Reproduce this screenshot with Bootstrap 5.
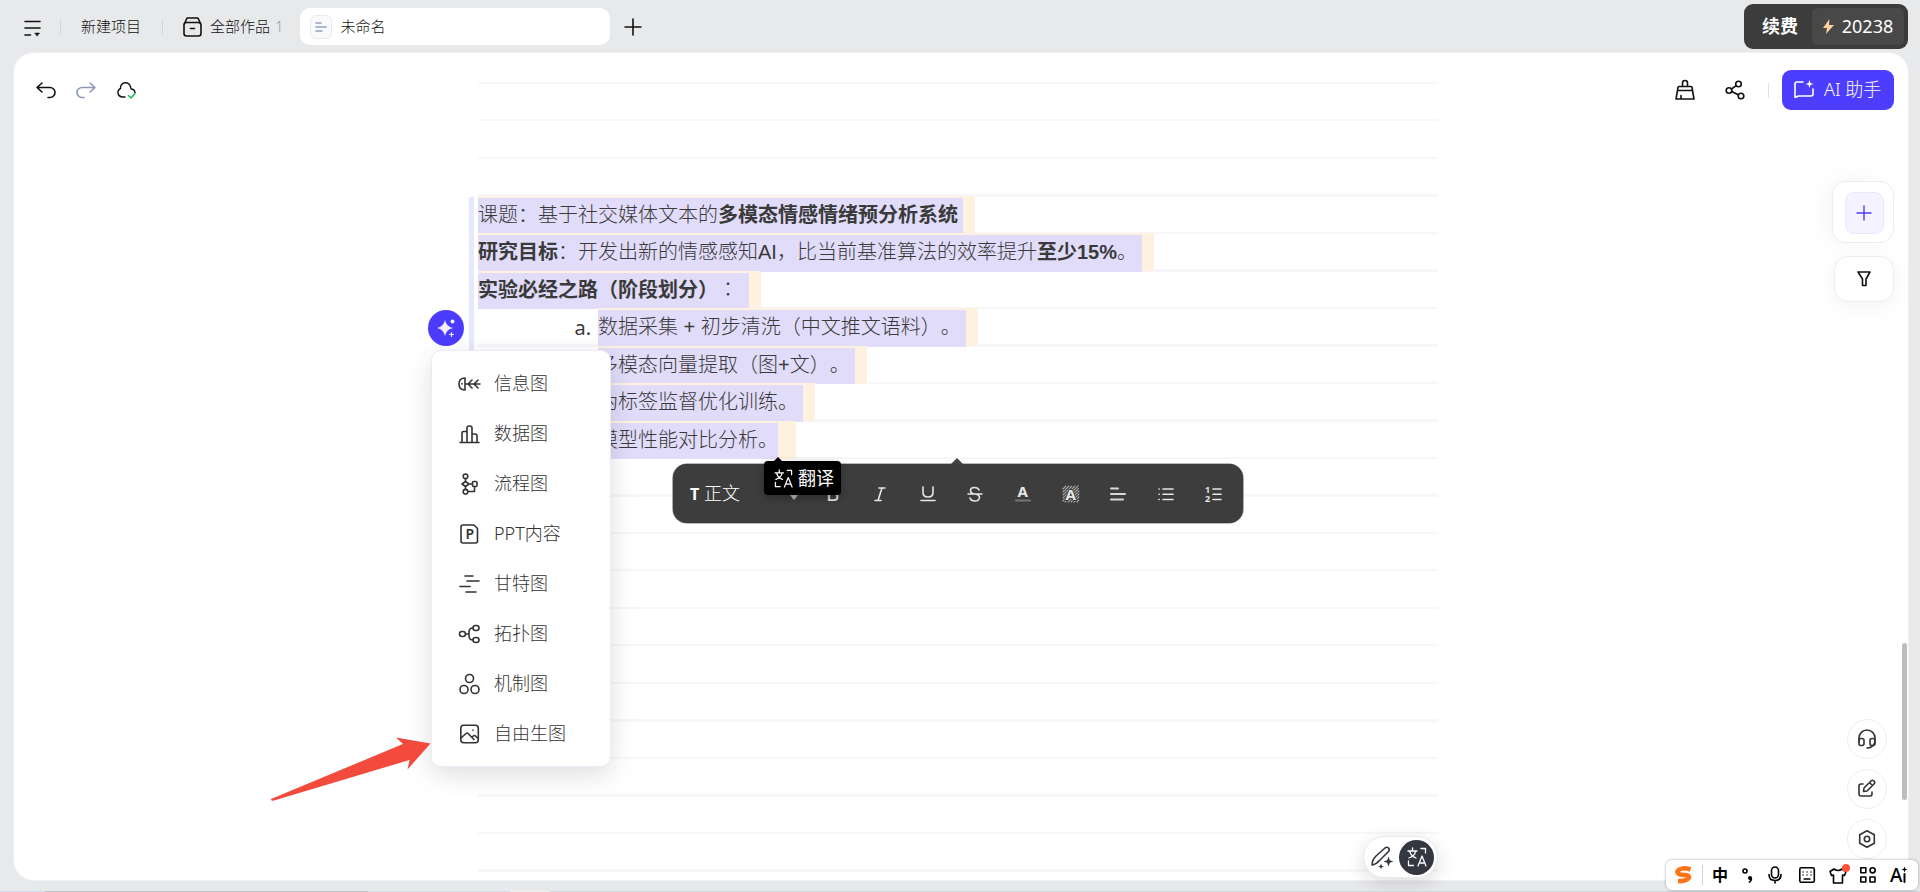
<!DOCTYPE html>
<html lang="zh-CN">
<head>
<meta charset="utf-8">
<title>未命名</title>
<link rel="stylesheet" href="https://cdn.jsdelivr.net/npm/bootstrap@5.3.0/dist/css/bootstrap.min.css">
<script src="https://cdn.jsdelivr.net/npm/bootstrap@5.3.0/dist/js/bootstrap.bundle.min.js"></script>
<style>
body{width:1920px;height:892px;overflow:hidden;background:#e8e9eb;color:#111;font:300 15px/1.5 "Noto Sans","Noto Sans CJK SC",sans-serif;text-spacing-trim:space-all}
svg{display:block;flex:none;overflow:visible;fill:none;stroke:currentColor;stroke-width:1.6;stroke-linecap:round;stroke-linejoin:round}
svg text{stroke:none;fill:currentColor}
.topbar{height:53px;padding:0 12px 0 24px}
.topbar>*{flex:none}
.vline{width:1px;height:15px;background:#d2d4d8}
.tab-item{width:310px;height:37px;margin-left:16px;padding-left:10px;border-radius:10px;background:#fff}
.doc-ico{width:22px;height:24px;border:1px solid #e9eaef;border-radius:6px;background:#fafafc;color:#93a0c4}
.credit{width:164px;height:45px;border-radius:9px;background:#3c3c3c;padding:4px 4px 4px 18px;color:#fff;font-size:18px}
.credit-num{width:92px;height:37px;border-radius:6px;background:#484848;font-weight:400}
.board{width:1894px;height:827px;margin-left:14px;border-radius:20px;background:#fff;box-shadow:0 0 0 1px #f0f0f5}
.tools-l{left:22px;top:27px}
.tools-r{right:14px;top:17px}
.ai-btn{width:112px;height:40px;border-radius:9px;background:#4d3dff;color:#fff;font-size:18px;padding:0 0 1px 12px}
.sheet{width:960px;height:790px;margin-left:464px;margin-top:29px;padding-top:113.5px;background:repeating-linear-gradient(#f6f6fb 0 2px,transparent 2px 37.5px);color:#3a3a3a;font:300 20px/35px "Liberation Sans","Noto Sans CJK SC",sans-serif}
.sheet-wrap{height:827px;overflow:hidden}
.row-ln{height:37.5px;display:flex;white-space:nowrap}
.hl{height:38px;padding-top:2px;background:#fff1df}
.sel{height:36.5px;background:#e1dcf9;margin-right:12px}
.sel b{font-weight:700}
.row-ln:nth-child(7) .sel{margin-right:18px}
.num{width:120px;padding:2px 7px 0 0;text-align:right;font-family:"Noto Sans",sans-serif;font-weight:400}
.mid{font-family:"Noto Sans CJK TC";display:inline-block;width:20px;line-height:20px}
.sidebar-mark{left:455px;top:144px;width:5px;height:200px;background:#e6e9fd}
.spark{left:414px;top:257px;width:36px;height:36px;border-radius:50%;background:#4b3bff;color:#f2f0ff}
.ai-menu{left:417px;top:297px;width:180px;height:417px;border:1px solid #eceaf6;border-radius:10px;background:#fff;box-shadow:0 8px 26px rgba(0,0,0,.13);padding-top:8px;font-size:18px;color:#333;z-index:2}
.ai-menu>div{height:50px;padding:0 0 1px 26px;gap:13px}
.fmt{left:659px;top:411px;width:570px;height:59px;border-radius:14px;background:#3d3d3d;box-shadow:0 0 0 .6px #777;color:#e6e6e6;font-size:18px}
.fmt:before{content:"";position:absolute;left:278px;top:-6px;border:6px solid transparent;border-top:0;border-bottom-color:#444}
.fmt .cell{width:47.55px;display:flex;justify-content:center}
.gl{font:20px/24px Inter,"Liberation Sans",sans-serif}
.tip{left:750px;top:408px;width:77px;height:34px;border-radius:4px;background:#000;color:#fff;font-size:18px;gap:5px;padding:1px 0 0 10px;z-index:3;box-shadow:0 3px 9px rgba(0,0,0,.3)}
.tip:before{content:"";position:absolute;left:10px;top:-4px;border:4px solid transparent;border-top:0;border-bottom-color:#000}
.side{right:14px;top:128px}
.card-a{width:62px;height:62px;border:1px solid #ececf6;border-radius:14px;background:#fff;box-shadow:-8px 0 22px rgba(0,0,0,.04);padding:1px 0 0 2px}
.card-in{width:39px;height:42px;border:1px solid #eae7ff;border-radius:9px;background:#f5f3ff;color:#4b3bff}
.card-b{width:60px;height:46px;border:1px solid #ececf6;border-radius:14px;background:#fff;box-shadow:0 4px 22px rgba(0,0,0,.05)}
.help{right:21px;top:666px;gap:10px;color:#333}
.help>div{width:40px;height:40px;border:1px solid #eeeef7;border-radius:50%;background:#fff}
.thumb{right:1px;top:590px;width:5px;height:157px;border-radius:3px;background:#bdbdbd}
.pill{left:1349px;top:783px;width:75px;height:42px;border-radius:21px;background:#fff;border:1px solid #e9e9ec;box-shadow:0 6px 20px rgba(0,0,0,.13);color:#343641;padding:0 3px 0 6px}
.pill-on{width:35px;height:35px;border-radius:50%;background:#343641;color:#fff}
.ime{left:1666px;top:860px;width:252px;height:30px;border-radius:6px;background:#fff;box-shadow:0 0 3px rgba(0,0,0,.35);padding:0 10px 0 9px;color:#000}
.arrow-red{left:268px;top:734px;z-index:4}
.strip{left:0;top:891px;width:1920px;height:1px;background:linear-gradient(90deg,#cfdcec 45px,#bfc1c4 45px 368px,#d3dfeb 368px 510px,#eee 510px 550px,#ccd9e0 550px)}
</style>
</head>
<body class="position-relative">
<svg width="0" height="0" class="position-absolute"><defs>
<g id="trans"><path d="M1 4h9M5.500 1v3M2 11q6-2 6.500-7M3 5q1 4 6 6M14 1.500h4.500v4.500M1.500 14v4.500h5M11 19l4-10 4 10M12.200 16h5.600"/></g>
</defs></svg>

<header class="topbar d-flex align-items-center">
  <svg width="17" height="18" viewBox="0 0 17 18" style="margin-top:2px"><path d="M1 2.500h15M1 9h15M1 16h5.500"/><path d="M11 14h4.500L13.200 17z" fill="currentColor" stroke-width=".5"/></svg>
  <i class="vline" style="margin:0 20px 0 19px"></i>
  <span>新建项目</span>
  <i class="vline" style="margin:0 20px 0 21px"></i>
  <svg width="19" height="20" viewBox="0 0 19 20"><rect x="1" y="5.500" width="17" height="13.500" rx="2.500"/><path d="M2 5.500L4 1h11l2 4.500M7.500 11.500h4"/></svg>
  <span style="margin-left:8px">全部作品</span>
  <span style="margin-left:5px;color:#969eae">1</span>
  <div class="tab-item d-flex align-items-center"><span class="doc-ico d-flex align-items-center justify-content-center"><svg width="12" height="12" viewBox="0 0 12 12"><path d="M1 2h5M1 6h10M1 10h6"/></svg></span><span style="margin-left:9px">未命名</span></div>
  <svg width="18" height="18" viewBox="0 0 18 18" style="margin-left:14px"><path d="M9 1v16M1 9h16"/></svg>
  <div class="credit d-flex align-items-center justify-content-between ms-auto align-self-start mt-1"><b class="fw-bold">续费</b><div class="credit-num d-flex align-items-center justify-content-center gap-2"><svg width="11" height="15" viewBox="0 0 11 15"><path d="M6.500 0L0 9h4l-1 6 8-9H6z" fill="#ffd099" stroke="none"/></svg><span>20238</span></div></div>
</header>

<main class="board position-relative">
  <div class="sheet-wrap"><div class="d-flex flex-column h-100"><article class="sheet">
    <div class="row-ln"><div class="hl"><div class="sel" style="width:485px">课题：基于社交媒体文本的<b>多模态情感情绪预分析系统</b></div></div></div>
    <div class="row-ln"><div class="hl"><div class="sel" style="width:664px"><b>研究目标</b>：开发出新的情感感知AI，比当前基准算法的效率提升<b>至少15%</b>。</div></div></div>
    <div class="row-ln"><div class="hl"><div class="sel" style="width:271px"><b>实验必经之路（阶段划分）</b><span class="mid" lang="zh-Hant">：</span></div></div></div>
    <div class="row-ln"><span class="num">a.</span><div class="hl"><div class="sel" style="width:368px">数据采集 + 初步清洗（中文推文语料）<span class="d-inline-block lh-1">。</span></div></div></div>
    <div class="row-ln"><span class="num">b.</span><div class="hl"><div class="sel" style="width:257px">多模态向量提取（图+文）<span class="d-inline-block lh-1">。</span></div></div></div>
    <div class="row-ln"><span class="num">c.</span><div class="hl"><div class="sel" style="width:205px">伪标签监督优化训练。</div></div></div>
    <div class="row-ln"><span class="num">d.</span><div class="hl"><div class="sel" style="width:180px">模型性能对比分析。</div></div></div>
  </article></div></div>

  <div class="tools-l position-absolute d-flex align-items-center">
    <svg width="20" height="20" viewBox="0 0 20 20"><path d="M6 3L1 7.500 6 12M1 7.500h13a5 5 0 0 1 0 10h-2"/></svg>
    <svg width="20" height="20" viewBox="0 0 20 20" style="margin-left:20px;color:#8d99b5"><path d="M14 3l5 4.500-5 4.500M19 7.500H6a5 5 0 0 0 0 10h2"/></svg>
    <svg width="20" height="20" viewBox="0 0 20 20" style="margin-left:20px"><path stroke-width="1.400" d="M9 17H6A4.500 4.500 0 0 1 4.500 8.500 5 5 0 0 1 14.500 7q.8 1.500.5 2 3.500 0 4 3.500"/><path d="M12.500 15.500l2.500 2.500 4-4.500" stroke="#1fb866"/></svg>
  </div>

  <div class="tools-r position-absolute d-flex align-items-center">
    <svg width="20" height="20" viewBox="0 0 20 20"><path d="M3 7.500Q3 6.500 4 6.500h12q1 0 1 1L19 19H1zM2.500 10.500h15M7.500 6V3a2.500 2.500 0 0 1 5 0v3M6 15.500V19"/></svg>
    <svg width="20" height="20" viewBox="0 0 20 20" style="margin-left:30px"><circle cx="4" cy="10.500" r="2.800"/><circle cx="13.500" cy="4" r="2.800"/><circle cx="16" cy="16" r="2.800"/><path d="M6.500 9l4.700-3.300M6.700 11.500l6.500 3.200"/></svg>
    <i class="vline" style="margin:0 13px 0 23px;background:#dde2ef"></i>
    <div class="ai-btn d-flex align-items-center"><svg width="20" height="19" viewBox="0 0 20 19" style="margin-right:10px"><path d="M9 2H3Q1 2 1 4v13.500L4.500 16H17q2 0 2-2V9"/><path d="M15.500 0l1 3 3 1-3 1-1 3-1-3-3-1 3-1z" fill="currentColor" stroke="none"/></svg>AI 助手</div>
  </div>

  <div class="sidebar-mark position-absolute"></div>
  <div class="spark position-absolute d-flex align-items-center justify-content-center"><svg width="20" height="20" viewBox="0 0 20 20"><path d="M9 2q1.200 6.500 8 8-6.800 1.500-8 8-1.300-6.500-8-8 6.700-1.500 8-8z" fill="currentColor" stroke="none"/><circle cx="16.500" cy="3.500" r="2" fill="currentColor" stroke="none"/><path d="M15.500 14.500v4M13.500 16.500h4" stroke-width="1.200"/></svg></div>

  <nav class="ai-menu position-absolute">
    <div class="d-flex align-items-center"><svg width="23" height="20" viewBox="0 0 23 20"><path d="M7 4Q1 4 1 10t6 6zM7 10h15M14 6l-4 4 4 4M20 6l-4 4 4 4M4 9.500v.5"/></svg>信息图</div>
    <div class="d-flex align-items-center"><svg width="23" height="20" viewBox="0 0 23 20"><path d="M2 18.500h19M4 18V9q0-1.500 1.500-1.500H9M9 18V4q0-2 2-2h1q2 0 2 2v14M14 10h3q2 0 2 2v6"/></svg>数据图</div>
    <div class="d-flex align-items-center"><svg width="23" height="20" viewBox="0 0 23 20"><circle cx="7.500" cy="2.300" r="2.300"/><circle cx="7.500" cy="17.700" r="2.300"/><rect x="14.500" y="7.500" width="4.500" height="5" rx="1"/><path d="M7.500 5v3M4 10l3.500-2.500L11 10l-3.500 2.500zM11 10h3.500M7.500 12.500V15M10 17.500h6.500v-5"/></svg>流程图</div>
    <div class="d-flex align-items-center"><svg width="23" height="20" viewBox="0 0 23 20"><path d="M5 1h11l3.500 3.500V17q0 2-2 2H5q-2 0-2-2V3q0-2 2-2z"/><text x="7.500" y="15.300" font-size="14" font-weight="600" font-family="Noto Sans">P</text></svg>PPT内容</div>
    <div class="d-flex align-items-center"><svg width="23" height="20" viewBox="0 0 23 20"><path d="M7 2h8M9 7h12M2 12.500h10M8 18h10"/></svg>甘特图</div>
    <div class="d-flex align-items-center"><svg width="23" height="20" viewBox="0 0 23 20"><rect x="1.500" y="7.500" width="6" height="5" rx="2.500"/><rect x="15" y="1.500" width="6" height="5" rx="2.500"/><rect x="15" y="13.500" width="6" height="5" rx="2.500"/><path d="M7.500 10H11M15 4q-4 0-4 4v4q0 4 4 4"/></svg>拓扑图</div>
    <div class="d-flex align-items-center"><svg width="23" height="20" viewBox="0 0 23 20"><circle cx="11.500" cy="4.500" r="4"/><circle cx="6" cy="15.500" r="4"/><circle cx="17" cy="15.500" r="4"/></svg>机制图</div>
    <div class="d-flex align-items-center"><svg width="23" height="20" viewBox="0 0 23 20"><rect x="2.800" y="1.300" width="17.500" height="17.500" rx="3"/><path d="M3 14l5-4.500q1-1 2 0l6 6M14 13.500q2-3 3.500-1.500l2.500 2.500M15 6v.3"/></svg>自由生图</div>
  </nav>

  <div class="fmt position-absolute d-flex align-items-center">
    <span class="text-white" style="width:104px;padding-left:17px"><span class="fw-bold" style="font-size:16px">T</span> 正文</span>
    <svg width="8" height="5" viewBox="0 0 8 5" style="margin:8px 0 0 13px"><path d="M0 0h8L4 5z" fill="#bbb" stroke="none"/></svg>
    <span class="d-flex" style="margin-left:11px">
      <span class="cell gl">B</span>
      <span class="cell"><svg width="14" height="24" viewBox="0 0 14 24"><path d="M6 6h6M2 18.500h6M9 6L5 18.500"/></svg></span>
      <span class="cell"><svg width="14" height="24" viewBox="0 0 14 24"><path d="M2 5v5.500q0 4.500 5 4.500t5-4.500V5M0 18.500h14"/></svg></span>
      <span class="cell"><svg width="14" height="24" viewBox="0 0 14 24"><path d="M11 8q-1-2.500-4.500-2.500Q2.500 5.500 2.500 8.500T7 12t4.500 3.500q-.5 3.500-4.500 3.500t-5-3M0 12h14"/></svg></span>
      <span class="cell"><svg width="16" height="24" viewBox="0 0 16 24"><text x="2.500" y="15" font-size="15" font-weight="700" font-family="Noto Sans">A</text><path d="M1 18.500h14" stroke="#777" stroke-width="2"/></svg></span>
      <span class="cell"><svg width="16" height="24" viewBox="0 0 16 24"><path d="M0 7l3-3M0 10l6-6M0 13l9-9M0 16L12 4M0 19L15 4M2 20L16 6M5 20L16 9M8 20l8-8M11 20l5-5M14 20l2-2" stroke="#aaa" stroke-width="1.100" stroke-dasharray="2.500 .8"/><text x="2.500" y="17.500" font-size="15" font-weight="700" font-family="Noto Sans" style="stroke:#3d3d3d;stroke-width:2px;paint-order:stroke">A</text></svg></span>
      <span class="cell"><svg width="16" height="24" viewBox="0 0 16 24" style="stroke-width:2;color:#d8d8d8"><path d="M1 6.500h7M1 12h14M1 17.500h12"/></svg></span>
      <span class="cell"><svg width="16" height="24" viewBox="0 0 16 24"><path d="M1 7h.2M5 7h10M1 12.300h.2M5 12.300h10M1 17.500h.2M5 17.500h10"/></svg></span>
      <span class="cell"><svg width="16" height="24" viewBox="0 0 16 24"><path d="M8 7h8M8 12.300h8M8 17.500h8"/><text x="0" y="11" font-size="9" font-weight="700" font-family="Noto Sans">1</text><text x="0" y="19.500" font-size="9" font-weight="700" font-family="Noto Sans">2</text></svg></span>
    </span>
  </div>
  <div class="tip position-absolute d-flex align-items-center"><svg width="19" height="19" viewBox="0 0 20 20"><use href="#trans" stroke-width="1.300"/></svg><span class="text-nowrap fw-normal">翻译</span></div>

  <div class="side position-absolute d-flex flex-column align-items-end" style="gap:13px">
    <div class="card-a d-flex align-items-center justify-content-center"><div class="card-in d-flex align-items-center justify-content-center"><svg width="16" height="16" viewBox="0 0 16 16"><path d="M8 1v14M1 8h14" stroke-width="1.400"/></svg></div></div>
    <div class="card-b d-flex align-items-center justify-content-center"><svg width="14" height="16" viewBox="0 0 14 16"><path d="M1 1h12L9 8v6.500H5.500V8z"/></svg></div>
  </div>

  <div class="help position-absolute d-flex flex-column">
    <div class="d-flex align-items-center justify-content-center"><svg width="18" height="20" viewBox="0 0 18 20" style="margin-right:1px"><path d="M1 13V9a8 8 0 0 1 16 0v4M9 19q6 0 8-6"/><rect x="1" y="9.500" width="5" height="7" rx="2"/><rect x="12" y="9.500" width="5" height="7" rx="2"/></svg></div>
    <div class="d-flex align-items-center justify-content-center"><svg width="18" height="18" viewBox="0 0 18 18" style="margin:0 1px 2px 0"><path d="M5 5H3Q1 5 1 7v8q0 2 2 2h9q2 0 2-2v-2M6 9l7-7q1.500-1.500 3 0t0 3l-7 7-3.500.5zM12 4l2.500 2.500"/></svg></div>
    <div class="d-flex align-items-center justify-content-center"><svg width="18" height="18" viewBox="0 0 18 18"><path d="M9 .8l7.300 4v8.400L9 17.200l-7.300-4V4.800z"/><circle cx="9" cy="9" r="2.700"/></svg></div>
  </div>
  <div class="thumb position-absolute"></div>
  <div class="pill position-absolute d-flex align-items-center justify-content-between"><svg width="24" height="24" viewBox="0 0 24 24"><path d="M2 20Q2 15 6 11l9-8q2-1.500 3.500 0t0 3.500l-9 9Q6 19.500 2 20z"/><path d="M18.500 11.500l1.300 3.700 3.700 1.300-3.700 1.300-1.300 3.700-1.300-3.700-3.700-1.300 3.700-1.300zM11 18.500l.8 2.200 2.200.8-2.200.8-.8 2.200-.8-2.200-2.200-.8 2.200-.8z" fill="currentColor" stroke="none"/></svg><span class="pill-on d-flex align-items-center justify-content-center"><svg width="20" height="20" viewBox="0 0 20 20"><use href="#trans" stroke-width="1.300"/></svg></span></div>
</main>

<svg class="arrow-red position-absolute" width="166" height="70" viewBox="268 734 166 70"><path d="M271 800q1 1.200 3 .5L409.500 760l-2 9.500 23-26-34.500-6 7 6.500L271 799z" fill="#f24a3d" stroke="none"/></svg>

<footer class="ime position-absolute d-flex align-items-center" style="z-index:5">
  <svg width="18" height="18" viewBox="0 0 18 18"><path d="M15.500 3.500Q9 1 4.500 3.500T5 8.500l8 1q2.500 2-1 4T3 15" stroke="#ff7418" stroke-width="4.600" stroke-linecap="butt"/></svg>
  <i class="vline" style="height:20px;margin-left:9px"></i>
  <b class="fw-bold" style="font-size:16px;margin-left:9px">中</b>
  <svg width="11" height="16" viewBox="0 0 11 16" style="margin-left:14px"><circle cx="3" cy="4" r="2"/><circle cx="8" cy="11" r="2" fill="currentColor" stroke="none"/><path d="M9.300 11q.5 3-2 4"/></svg>
  <svg width="14" height="18" viewBox="0 0 14 18" style="margin-left:15px"><rect x="3.500" y="1" width="7" height="11" rx="3.500"/><path d="M1 8.500q0 6 6 6t6-6M7 15v2"/></svg>
  <svg width="16" height="16" viewBox="0 0 16 16" style="margin-left:17px"><rect x=".8" y=".8" width="14.500" height="14.500" rx="1.500"/><path d="M4 5h.1M8 5h.1M12 5h.1M4 8h.1M8 8h.1M12 8h.1M5 12h6" stroke-width="1.300"/></svg>
  <svg width="18" height="17" viewBox="0 0 18 17" style="margin-left:14px"><path d="M5 2q4 3 8 0l4 2.500-1.500 4-2-.5v8h-9V8l-2 .5L1 4.500z"/><circle cx="17" cy="1" r="4" fill="#ff5236" stroke="none"/></svg>
  <svg width="16" height="16" viewBox="0 0 16 16" style="margin-left:13px"><rect x=".8" y=".8" width="5" height="5"/><circle cx="12.600" cy="3.300" r="2.600"/><rect x=".8" y="10" width="5" height="5"/><rect x="10" y="10" width="5" height="5"/></svg>
  <svg width="18" height="18" viewBox="0 0 18 18" style="margin-left:14px"><text x="0" y="16" font-size="19" font-family="Noto Sans" font-weight="500">A</text><path d="M14.500 8v8" stroke-width="2"/><path d="M14.500.5l.8 2.200 2.200.8-2.200.8-.8 2.200-.8-2.200-2.200-.8 2.200-.8z" fill="currentColor" stroke="none"/></svg>
</footer>
<div class="strip position-absolute"></div>
</body>
</html>
